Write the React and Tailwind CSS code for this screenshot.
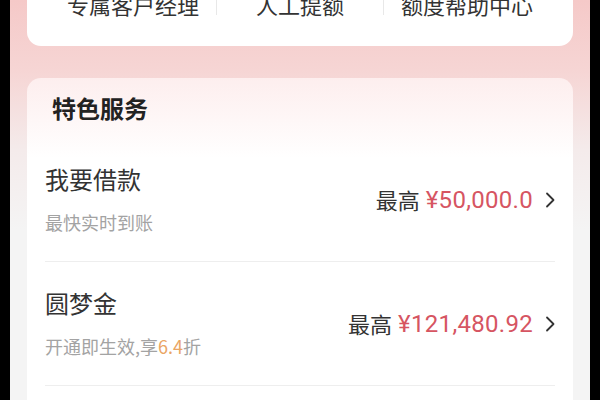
const font = { fontFamily: '"Noto Sans CJK SC", "Noto Sans", sans-serif' };
const numFont = { fontFamily: 'Roboto, "Noto Sans CJK SC", sans-serif' };

const Chevron = () => (
  <svg width="10" height="16" viewBox="0 0 10 16" className="ml-[12px]">
    <polyline
      points="2,1.5 8.5,8 2,14.5"
      fill="none"
      stroke="#333"
      strokeWidth="1.8"
      strokeLinecap="round"
      strokeLinejoin="round"
    />
  </svg>
);

const ServiceRow = ({ title, sub, amount }) => (
  <div className="h-[124px] flex items-center justify-between border-b border-[#eeeeee]">
    <div className="flex flex-col">
      <div className="text-[24px] leading-[30px] text-[#333]">{title}</div>
      <div className="mt-[15px] text-[18px] leading-[26px] text-[#a3a3a3]">{sub}</div>
    </div>
    <div className="flex items-center">
      <span className="text-[22px] text-[#333]">最高</span>
      <span className="ml-[6px] text-[24px] tracking-[0.3px] text-[#d65562]" style={numFont}>
        ¥{amount}
      </span>
      <Chevron />
    </div>
  </div>
);

export default function App() {
  return (
    <div className="w-[600px] h-[400px] bg-black overflow-hidden" style={font}>
      <div className="mx-[10px] w-[580px] h-[400px] flex flex-col px-[17px] bg-[linear-gradient(180deg,#f5c9c8_0px,#f6d5d4_70px,#f4ebeb_150px,#f4f4f4_230px)]">
        {/* Top shortcuts */}
        <div className="-mt-[15px] shrink-0 bg-white rounded-b-[14px] px-[23px] pb-[23px]">
          <div className="h-[38px] flex items-center text-[22px] text-[#333]">
            <div className="flex-1 text-center">专属客户经理</div>
            <div className="h-[22px] border-l border-[#e8e8e8]" />
            <div className="flex-1 text-center">人工提额</div>
            <div className="h-[22px] border-l border-[#e8e8e8]" />
            <div className="flex-1 text-center">额度帮助中心</div>
          </div>
        </div>

        {/* Special services */}
        <div className="mt-[32px] shrink-0 rounded-[14px] bg-[linear-gradient(180deg,#fdeeee_0px,#ffffff_80px)]">
          <div className="h-[60px] flex items-center pl-[25px] text-[24px] font-bold text-[#222]">
            特色服务
          </div>
          <div className="px-[18px] pb-[60px]">
            <ServiceRow title="我要借款" sub="最快实时到账" amount="50,000.0" />
            <ServiceRow
              title="圆梦金"
              sub={
                <>
                  开通即生效,享<span className="text-[#eaa564]">6.4</span>折
                </>
              }
              amount="121,480.92"
            />
          </div>
        </div>
      </div>
    </div>
  );
}
